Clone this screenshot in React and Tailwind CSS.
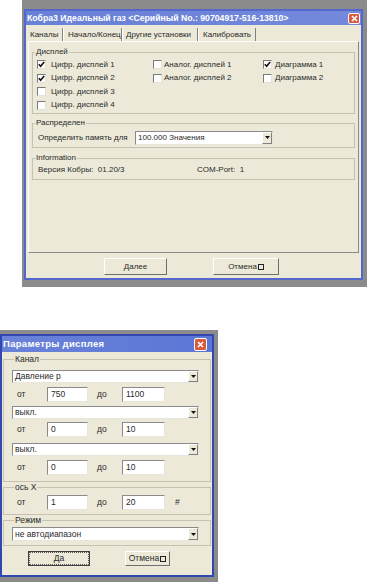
import React from "react";

const Check = ({ checked }) => (
    <span className="w-[9px] h-[9px] shrink-0 bg-white border border-t-[#7a7a7a] border-l-[#7a7a7a] border-b-[#e4e2d6] border-r-[#e4e2d6] flex items-center justify-center">
        {checked && (
            <svg width="7" height="7" viewBox="0 0 7 7">
                <polyline points="0.8,3.3 2.6,5.2 6.2,1" fill="none" stroke="#111" strokeWidth="1.6" />
            </svg>
        )}
    </span>
);

const DropBtn = () => (
    <span className="w-[10px] h-full shrink-0 bg-[#ece9d8] border border-t-white border-l-white border-b-[#808080] border-r-[#808080] flex items-center justify-center">
        <svg width="5" height="3" viewBox="0 0 5 3">
            <path d="M0 0h5L2.5 3z" fill="#111" />
        </svg>
    </span>
);

const Select = ({ value, className = "" }) => (
    <div className={`flex bg-white border border-t-[#8a8a8a] border-l-[#8a8a8a] border-b-[#e8e6da] border-r-[#e8e6da] ${className}`}>
        <span className="flex-1 pl-[2px] leading-none flex items-center whitespace-nowrap">{value}</span>
        <DropBtn />
    </div>
);

const Field = ({ value, w }) => (
    <div className={`h-[15px] ${w} bg-white border border-t-[#8a8a8a] border-l-[#8a8a8a] border-b-[#e8e6da] border-r-[#e8e6da] pl-[3px] flex items-center leading-none`}>
        {value}
    </div>
);

const Btn = ({ children, className = "", def }) => (
    <div className={`flex items-center justify-center bg-[#ece9d8] border whitespace-nowrap ${def ? "border-[#404040]" : "border-t-white border-l-white border-b-[#6e6e6e] border-r-[#6e6e6e]"} ${className}`}>
        {def ? (
            <span className="w-full h-full border border-dotted border-[#555] flex items-center justify-center">{children}</span>
        ) : (
            children
        )}
    </div>
);

const CloseBtn = ({ className = "" }) => (
    <span className={`bg-[#d95a3c] border border-white rounded-[2px] flex items-center justify-center ${className}`}>
        <svg width="7" height="7" viewBox="0 0 7 7">
            <path d="M1 1L6 6M6 1L1 6" stroke="white" strokeWidth="1.6" />
        </svg>
    </span>
);

const Group = ({ label, className = "", children }) => (
    <fieldset className={`border border-[#c5c2b2] ${className}`}>
        <legend className="ml-[2px] px-[1px] leading-[10px]">{label}</legend>
        {children}
    </fieldset>
);

const Row = ({ from, to, hash }) => (
    <div className="flex items-center h-[15px]">
        <span className="w-[35px] pl-[5px]">от</span>
        <Field value={from} w="w-[41px]" />
        <span className="w-[34px] pl-[9px]">до</span>
        <Field value={to} w="w-[43px]" />
        {hash && <span className="ml-[10px]">#</span>}
    </div>
);

export default function App() {
    return (
        <div className="w-[367px] h-[582px] bg-white overflow-hidden flex flex-col font-['Liberation_Sans',Arial,sans-serif] text-[#2a2a2a]">
            {/* main settings window */}
            <div className="ml-[22px] w-[345px] h-[287px] bg-[#8b8b8b] pt-[9px] pl-[2px] pr-[4px] pb-[7px] flex">
                <div className="flex-1 flex flex-col border-2 border-[#5367cc] bg-[#ece9d8] text-[8px] whitespace-nowrap">
                    <div className="h-[14px] bg-gradient-to-r from-[#6880d6] to-[#7489dc] flex items-center justify-between pl-[1px] pr-[1px]">
                        <span className="text-white font-bold text-[8.7px] leading-none">Кобра3 Идеальный газ &lt;Серийный No.: 90704917-516-13810&gt;</span>
                        <CloseBtn className="w-[12px] h-[11px]" />
                    </div>

                    {/* tabs */}
                    <div className="flex pt-[3px] px-[2px] h-[16px]">
                        <span className="w-[35px] pl-[2px] border-r border-r-[#808080] flex items-center leading-none">Каналы</span>
                        <span className="w-[59px] pl-[4px] border-l border-l-white border-r border-r-[#808080] flex items-center leading-none">Начало/Конец</span>
                        <span className="w-[76px] pl-[3px] border-l border-l-white border-r border-r-[#808080] flex items-center leading-none">Другие установки</span>
                        <span className="w-[58px] pl-[4px] border-l border-l-white border-r border-r-[#808080] flex items-center leading-none">Калибровать</span>
                    </div>

                    {/* tab panel */}
                    <div className="h-[212px] mx-[2px] border border-t-white border-l-white border-b-[#8a8a8a] border-r-[#8a8a8a] pt-[5px] pl-[3px] pr-[3px]">
                        <Group label="Дисплей" className="pb-[1px]">
                            <div className="grid grid-cols-[116px_110px_1fr] pl-[4px] pt-[1px]">
                                {[
                                    ["Цифр. дисплей 1", true, "Аналог. дисплей 1", false, "Диаграмма 1", true],
                                    ["Цифр. дисплей 2", true, "Аналог. дисплей 2", false, "Диаграмма 2", false],
                                    ["Цифр. дисплей 3", false],
                                    ["Цифр. дисплей 4", false],
                                ].map((r, i) => (
                                    <React.Fragment key={i}>
                                        <div className="h-[13.5px] flex items-center gap-[5px]"><Check checked={r[1]} />{r[0]}</div>
                                        <div className="h-[13.5px] flex items-center gap-[2px]">{r[2] && <><Check checked={r[3]} />{r[2]}</>}</div>
                                        <div className="h-[13.5px] flex items-center gap-[3px]">{r[4] && <><Check checked={r[5]} />{r[4]}</>}</div>
                                    </React.Fragment>
                                ))}
                            </div>
                        </Group>

                        <Group label="Распределен" className="mt-[4px] pb-[2px]">
                            <div className="flex items-center h-[15px] mt-[2px] pl-[5px]">
                                <span className="w-[97px]">Определить память для</span>
                                <Select value="100.000 Значения" className="w-[138px] h-[14px]" />
                            </div>
                        </Group>

                        <Group label="Information" className="mt-[5px] pb-[2px]">
                            <div className="flex items-center h-[14px] pl-[5px]">
                                <span className="w-[159px]">Версия Кобры:&nbsp; 01.20/3</span>
                                <span>COM-Port:&nbsp; 1</span>
                            </div>
                        </Group>
                    </div>

                    <div className="flex mt-[5px] h-[17px]">
                        <Btn className="ml-[78px] w-[63px]">Далее</Btn>
                        <Btn className="ml-[46px] w-[66px]">Отмена<span className="ml-[1px] inline-block w-[6px] h-[6px] border border-[#222]" /></Btn>
                    </div>
                </div>
            </div>

            {/* display parameters window */}
            <div className="mt-[43px] w-[218px] h-[252px] bg-[#8b8b8b] pt-[4px] pr-[4px] pb-[5px] flex">
                <div className="flex-1 flex flex-col border-2 border-[#3347b0] bg-[#ece9d8] text-[8.5px]">
                    <div className="h-[16px] bg-gradient-to-r from-[#6a82d8] to-[#5b76d6] flex items-center justify-between pl-[1px] pr-[5px]">
                        <span className="text-white font-bold text-[9.5px] tracking-[0.3px] leading-none">Параметры дисплея</span>
                        <CloseBtn className="w-[13px] h-[13px]" />
                    </div>
                    <div className="flex-1 px-[1px]">
                        <Group label="Канал" className="mt-[2px] pl-[8px] pr-[11px] pb-[6px]">
                            <Select value="Давление р" className="mt-[6px] h-[13px]" />
                            <div className="mt-[4px]"><Row from="750" to="1100" /></div>
                            <Select value="выкл." className="mt-[4px] h-[13px]" />
                            <div className="mt-[3px]"><Row from="0" to="10" /></div>
                            <Select value="выкл." className="mt-[6px] h-[13px]" />
                            <div className="mt-[4px]"><Row from="0" to="10" /></div>
                        </Group>
                        <Group label="ось X" className="pl-[8px] pr-[11px] pb-[4px]">
                            <div className="mt-[3px]"><Row from="1" to="20" hash /></div>
                        </Group>
                        <Group label="Режим" className="pl-[8px] pr-[11px] pb-[4px]">
                            <Select value="не автодиапазон" className="mt-[2px] h-[14px]" />
                        </Group>
                        <div className="flex mt-[5px] h-[15px]">
                            <Btn def className="ml-[25px] w-[62px]">Да</Btn>
                            <Btn className="ml-[35px] w-[45px]">Отмена<span className="ml-[1px] inline-block w-[6px] h-[6px] border border-[#222]" /></Btn>
                        </div>
                    </div>
                </div>
            </div>
        </div>
    );
}
